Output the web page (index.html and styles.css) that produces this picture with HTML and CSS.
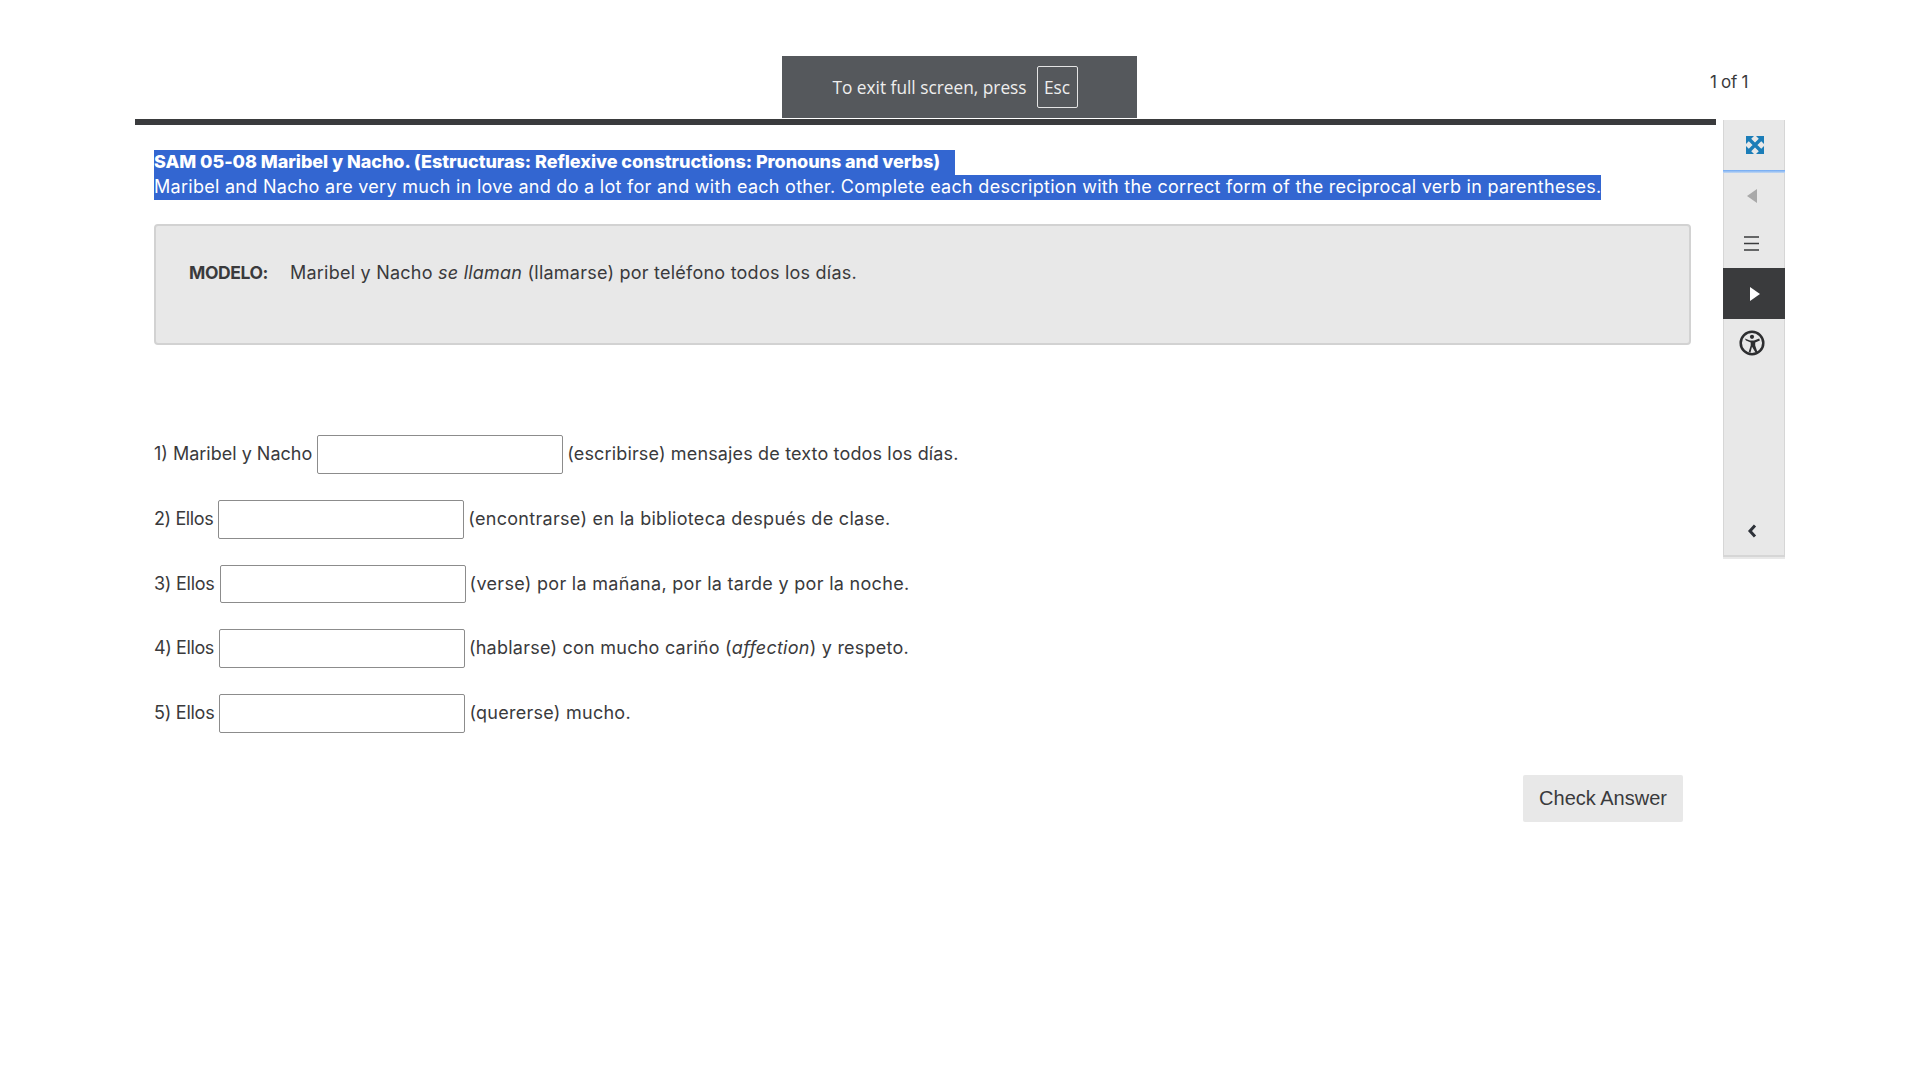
FILE: index.html
```html
<!DOCTYPE html>
<html lang="es">
<head>
<meta charset="utf-8">
<title>SAM 05-08</title>
<link rel="stylesheet" href="styles.css">
</head>
<body>
<div class="notice"><span>To exit full screen, press</span><span class="key">Esc</span></div>
<div class="page">
  <header class="counter">1 of 1</header>
  <div class="shell">
    <main class="main">
      <div class="intro">
        <span class="sel sel-title"><strong>SAM 05-08 Maribel y Nacho. (Estructuras: Reflexive constructions: Pronouns and verbs)</strong></span>
        <span class="sel sel-body">Maribel and Nacho are very much in love and do a lot for and with each other. Complete each description with the correct form of the reciprocal verb in parentheses.</span>
      </div>
      <section class="model">
        <strong class="model-label">MODELO:</strong>
        <span class="model-text">Maribel y Nacho <em>se llaman</em> (llamarse) por teléfono todos los días.</span>
      </section>
      <form class="rows">
        <div class="row"><span class="lead">1) Maribel y Nacho</span><input class="blank" type="text" aria-label="1"><span class="rest">(escribirse) mensajes de texto todos los días.</span></div>
        <div class="row"><span class="lead lead-short">2) Ellos</span><input class="blank" type="text" aria-label="2"><span class="rest">(encontrarse) en la biblioteca después de clase.</span></div>
        <div class="row"><span class="lead lead-short">3) Ellos</span><input class="blank" type="text" aria-label="3"><span class="rest">(verse) por la mañana, por la tarde y por la noche.</span></div>
        <div class="row"><span class="lead lead-short">4) Ellos</span><input class="blank" type="text" aria-label="4"><span class="rest">(hablarse) con mucho cariño (<em>affection</em>) y respeto.</span></div>
        <div class="row"><span class="lead lead-short">5) Ellos</span><input class="blank" type="text" aria-label="5"><span class="rest">(quererse) mucho.</span></div>
      </form>
      <div class="actions"><button class="check" type="button">Check Answer</button></div>
    </main>
    <aside class="rail">
      <div class="rail-top">
        <svg width="18" height="18" viewBox="0 0 18 18"><path d="M0 0h8L0 8zM18 0v8L10 0zM0 18v-8l8 8zM18 18h-8l8-8z" fill="#1b7db8"/><path d="M3 3l12 12M15 3L3 15" stroke="#1b7db8" stroke-width="3.400"/></svg>
      </div>
      <div class="rail-line"></div>
      <div class="rail-item rail-prev"><svg width="10" height="14" viewBox="0 0 10 14"><path d="M10 0v14L0 7z" fill="#a9a9a9"/></svg></div>
      <div class="rail-item rail-menu"><svg width="15" height="15" viewBox="0 0 15 15"><path d="M0 1h15M0 7.500h15M0 14h15" stroke="#3a3b3d" stroke-width="1.600"/></svg></div>
      <div class="rail-item rail-active"><svg width="10" height="14" viewBox="0 0 10 14"><path d="M0 0v14l10-7z" fill="#fff"/></svg></div>
      <div class="rail-item rail-a11y"><svg width="26" height="26" viewBox="0 0 26 26"><circle cx="13" cy="13" r="11.300" fill="none" stroke="#2d2e30" stroke-width="2.500"/><circle cx="13" cy="6.800" r="2.100" fill="#2d2e30"/><path d="M5.800 8.600l5.200 2h4l5.200-2 .7 1.800-4.700 2v3.200l2.100 6.200-1.800.6L13 16.800 11.500 22.400l-1.800-.6 2-6.200v-3.200l-4.700-2z" fill="#2d2e30"/></svg></div>
      <div class="rail-spacer"></div>
      <div class="rail-item rail-collapse"><svg width="10" height="14" viewBox="0 0 10 14"><path d="M8 1.500L3 7l5 5.500" fill="none" stroke="#2d3138" stroke-width="3"/></svg></div>
      <div class="rail-foot"></div>
    </aside>
  </div>
</div>
</body>
</html>
```
FILE: styles.css
```css
* { box-sizing: border-box; }
html, body { margin: 0; height: 100%; background: #fff; }
body {
  font-family: Inter, "Noto Sans", sans-serif;
  font-size: 18px;
  letter-spacing: 0.2px;
  color: #3a3a3c;
}
.page {
  width: 1650px;
  margin-left: 135px;
}
.counter {
  width: 1613px;
  height: 119px;
  padding-top: 72px;
  font-size: 17px;
  letter-spacing: -0.3px;
  line-height: 20px;
  text-align: right;
}
.shell {
  display: flex;
  align-items: flex-start;
  gap: 7px;
}
.main {
  width: 1581px;
  border-top: 6px solid #3a3b3d;
  padding: 25px 25px 0 19px;
}
.intro { display: flex; flex-direction: column; align-items: flex-start; }
.sel {
  display: block;
  height: 25px;
  line-height: 23px;
  background: #3366d1;
  color: #fff;
  white-space: nowrap;
}
.sel-title { padding-right: 15px; letter-spacing: -0.05px; }
.sel-title strong { font-weight: 800; }
.sel-body { letter-spacing: 0.28px; }
.model {
  margin-top: 24px;
  height: 121px;
  width: 1537px;
  background: #e8e8e8;
  border: 2px solid #d2d2d2;
  border-radius: 4px;
  padding: 30px 0 0 33px;
  line-height: 33px;
  display: flex;
  gap: 22px;
}
.model-label { font-size: 17.5px; letter-spacing: -0.4px; }
.model-text { letter-spacing: 0.23px; }
.rows {
  margin-top: 90px;
  display: flex;
  flex-direction: column;
  gap: 26px;
}
.row {
  display: flex;
  align-items: center;
  gap: 4px;
  height: 38.750px;
  white-space: nowrap;
}
.row span { margin-bottom: 1.500px; }
.lead { letter-spacing: 0; margin-right: 1px; }
.lead-short { letter-spacing: -0.4px; }
.row:nth-child(3) .lead, .row:nth-child(5) .lead { letter-spacing: -0.25px; }
.rest { letter-spacing: 0.15px; }
.row:nth-child(2) .rest, .row:nth-child(3) .rest { letter-spacing: 0.3px; }
.row:nth-child(4) .rest { letter-spacing: 0.24px; }
.row:nth-child(5) .rest { letter-spacing: 0.26px; }
.blank {
  width: 246px;
  height: 100%;
  border: 1px solid #8c8c8c;
  border-radius: 2px;
  background: #fff;
  padding: 0;
}
.actions {
  margin-top: 42px;
  display: flex;
  justify-content: flex-end;
  padding-right: 8px;
}
.check {
  width: 160px;
  height: 47px;
  border: 0;
  border-radius: 2px;
  background: #e8e8e8;
  color: #3a3a3c;
  font-family: "Liberation Sans", Arial, sans-serif;
  font-size: 20px;
  padding: 0;
}
.rail {
  width: 62px;
  height: 439px;
  margin-top: 1px;
  display: flex;
  flex-direction: column;
  background: #e8e8e8;
  border-left: 1px solid #d6d6d6;
  border-right: 1px solid #d6d6d6;
}
.rail-top {
  height: 50px;
  display: flex;
  align-items: center;
  justify-content: center;
  padding-left: 2px;
}
.rail-line {
  height: 3px;
  margin: 0 -1px;
  background: linear-gradient(#6ea8f4, #c4d9f2);
}
.rail-item {
  height: 48px;
  display: flex;
  align-items: center;
  justify-content: center;
  padding-right: 4px;
}
.rail-prev { height: 47px; padding-bottom: 2px; }
.rail-menu { padding-bottom: 2px; padding-right: 6px; }
.rail-active {
  height: 51px;
  margin: 0 -1px;
  background: #3a3b3d;
  padding: 0 0 0 2px;
}
.rail-a11y { padding-right: 4px; }
.rail-spacer { flex: 1; }
.rail-collapse { padding-right: 5px; }
.rail-foot {
  height: 4px;
  margin: 0 -1px;
  background: #e8e8e8;
  border-top: 2px solid #d6d6d6;
}
.notice {
  position: absolute;
  left: 782px;
  top: 56px;
  width: 355px;
  height: 62px;
  background: #55585c;
  color: #eee;
  font-family: "Open Sans", sans-serif;
  font-size: 17.300px;
  letter-spacing: 0;
  display: flex;
  align-items: center;
  justify-content: center;
  gap: 10px;
  padding-right: 9px;
}
.key {
  width: 41px;
  height: 42px;
  border: 1px solid #e4e4e4;
  border-radius: 2px;
  display: flex;
  align-items: center;
  justify-content: center;
}
```
